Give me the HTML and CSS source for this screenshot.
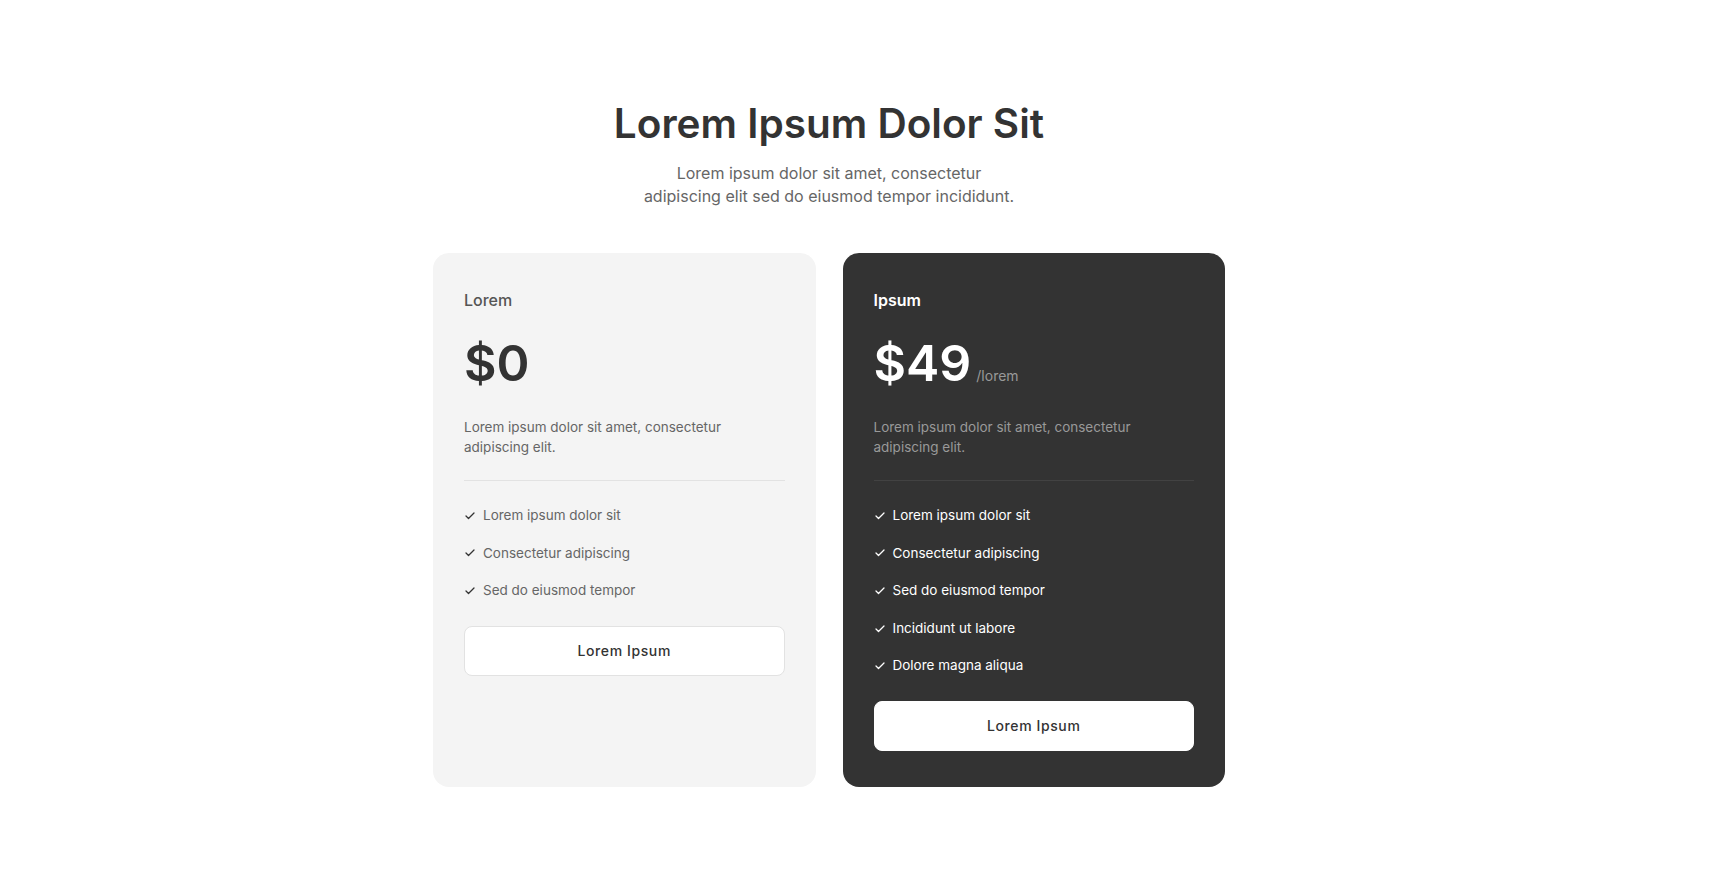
FILE: index.html
```html
<!DOCTYPE html>
<html lang="en">
<head>
<meta charset="utf-8">
<title>Pricing</title>
<link rel="stylesheet" href="styles.css">
</head>
<body>
<main class="page">
  <header class="intro">
    <h1 class="title">Lorem Ipsum Dolor Sit</h1>
    <p class="subtitle">Lorem ipsum dolor sit amet, consectetur<br>adipiscing elit sed do eiusmod tempor incididunt.</p>
  </header>
  <section class="plans">
    <article class="plan plan-light">
      <h2 class="plan-name">Lorem</h2>
      <div class="price"><span class="amount">$0</span></div>
      <p class="desc">Lorem ipsum dolor sit amet, consectetur<br>adipiscing elit.</p>
      <hr class="divider">
      <ul class="features">
        <li><svg class="check" viewBox="0 0 24 24"><polyline points="20 6 9 17 4 12"/></svg>Lorem ipsum dolor sit</li>
        <li><svg class="check" viewBox="0 0 24 24"><polyline points="20 6 9 17 4 12"/></svg>Consectetur adipiscing</li>
        <li><svg class="check" viewBox="0 0 24 24"><polyline points="20 6 9 17 4 12"/></svg>Sed do eiusmod tempor</li>
      </ul>
      <button class="btn">Lorem Ipsum</button>
    </article>
    <article class="plan plan-dark">
      <h2 class="plan-name">Ipsum</h2>
      <div class="price"><span class="amount">$49</span><span class="per">/lorem</span></div>
      <p class="desc">Lorem ipsum dolor sit amet, consectetur<br>adipiscing elit.</p>
      <hr class="divider">
      <ul class="features">
        <li><svg class="check" viewBox="0 0 24 24"><polyline points="20 6 9 17 4 12"/></svg>Lorem ipsum dolor sit</li>
        <li><svg class="check" viewBox="0 0 24 24"><polyline points="20 6 9 17 4 12"/></svg>Consectetur adipiscing</li>
        <li><svg class="check" viewBox="0 0 24 24"><polyline points="20 6 9 17 4 12"/></svg>Sed do eiusmod tempor</li>
        <li><svg class="check" viewBox="0 0 24 24"><polyline points="20 6 9 17 4 12"/></svg>Incididunt ut labore</li>
        <li><svg class="check" viewBox="0 0 24 24"><polyline points="20 6 9 17 4 12"/></svg>Dolore magna aliqua</li>
      </ul>
      <button class="btn">Lorem Ipsum</button>
    </article>
  </section>
</main>
</body>
</html>
```

FILE: styles.css
```css
* { box-sizing: border-box; }

html, body {
  margin: 0;
  padding: 0;
  background: #ffffff;
}

body {
  font-family: Inter, "Noto Sans", "Liberation Sans", sans-serif;
  color: #333333;
}

.page {
  width: 792px;
  margin: 0 0 0 433px;
  padding-top: 100px;
}

.intro {
  text-align: center;
}

.title {
  margin: 0;
  font-size: 40.5px;
  line-height: 48px;
  font-weight: 600;
  color: #333333;
}

.subtitle {
  margin: 14px 0 0;
  font-size: 16px;
  line-height: 23px;
  color: #666666;
}

.plans {
  display: grid;
  grid-template-columns: 1fr 1fr;
  gap: 27px;
  margin-top: 45px;
}

.plan {
  border-radius: 16px;
  padding: 35px 31px 36px;
  display: flex;
  flex-direction: column;
}

.plan-light { background: #f4f4f4; }
.plan-dark { background: #333333; }

.plan-name {
  margin: 0;
  font-size: 16px;
  line-height: 24px;
  font-weight: 500;
  color: #555555;
}

.plan-dark .plan-name {
  color: #ffffff;
  font-weight: 600;
}

.price {
  display: flex;
  align-items: baseline;
  margin-top: 27px;
}

.amount {
  font-size: 50px;
  line-height: 48px;
  font-weight: 600;
  color: #333333;
}

.plan-dark .amount { color: #ffffff; }

.per {
  margin-left: 5px;
  font-size: 14px;
  color: #999999;
}

.desc {
  margin: 30px 0 0;
  font-size: 13.5px;
  line-height: 20px;
  color: #666666;
}

.plan-dark .desc { color: #999999; }

.divider {
  margin: 23px 0 0;
  border: 0;
  height: 1px;
  background: #e2e2e2;
}

.plan-dark .divider { background: #424242; }

.features {
  list-style: none;
  margin: 24px 0 0;
  padding: 0;
  display: flex;
  flex-direction: column;
  gap: 16px;
}

.features li {
  display: flex;
  align-items: center;
  gap: 7px;
  font-size: 13.5px;
  line-height: 21.6px;
  color: #666666;
}

.plan-dark .features li { color: #ffffff; }

.check {
  width: 12px;
  height: 12px;
  flex: none;
  fill: none;
  stroke: #333333;
  stroke-width: 2.6;
  stroke-linecap: round;
  stroke-linejoin: round;
}

.plan-dark .check { stroke: #ffffff; }

.btn {
  margin-top: 24px;
  height: 50px;
  width: 100%;
  border: 1px solid #e2e2e2;
  border-radius: 8px;
  background: #ffffff;
  font-family: inherit;
  font-size: 14px;
  font-weight: 500;
  color: #333333;
  letter-spacing: 0.6px;
  cursor: pointer;
}

.plan-dark .btn { border-color: #ffffff; }
```
